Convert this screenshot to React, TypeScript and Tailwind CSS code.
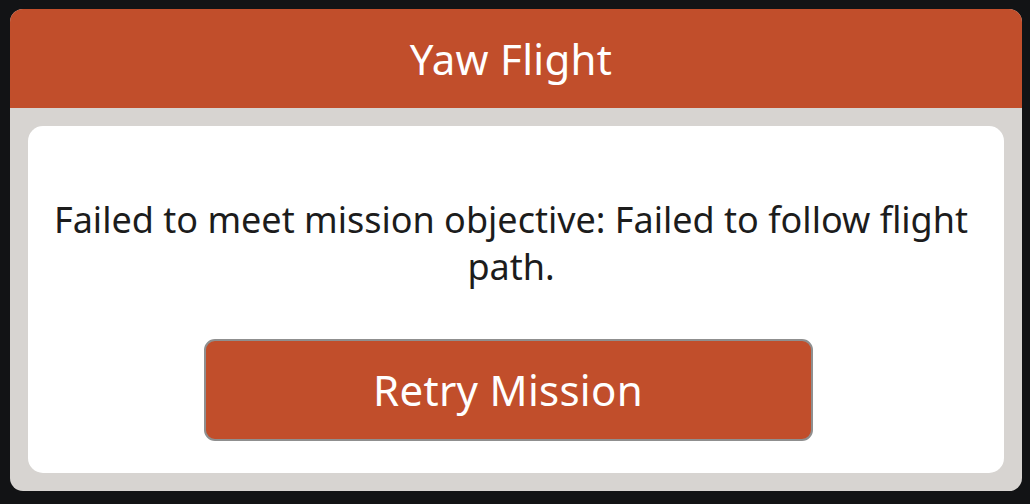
import React from "react";

export default function App() {
  return (
    <div
      className="w-[1030px] h-[504px] bg-[#121315] overflow-hidden pt-[9px] pl-[10px]"
      style={{ fontFamily: '"Noto Sans", "Open Sans", sans-serif' }}
    >
      <div className="w-[1012px] h-[482px] rounded-[13px] overflow-hidden bg-[#d7d4d1] flex flex-col">
        <div className="h-[99px] bg-[#c14e2b] flex items-center justify-center pr-[10px] text-white text-[42px] tracking-[0.3px] leading-none">
          Yaw Flight
        </div>
        <div className="flex-1 p-[18px]">
          <div className="h-full bg-white rounded-[15px] flex flex-col items-center pt-[70px]">
            <p className="text-[36px] leading-[47px] text-[#1c1c1c] text-center pl-[10px] pr-[20px]">
              Failed to meet mission objective: Failed to follow flight path.
            </p>
            <div className="mt-[49px] pr-[16px] flex justify-center w-full">
              <button className="w-[609px] h-[102px] bg-[#c14e2b] border-2 border-[#8f8f8f] rounded-[11px] text-white text-[42px] tracking-[0.3px] leading-none">
                Retry Mission
              </button>
            </div>
          </div>
        </div>
      </div>
    </div>
  );
}
